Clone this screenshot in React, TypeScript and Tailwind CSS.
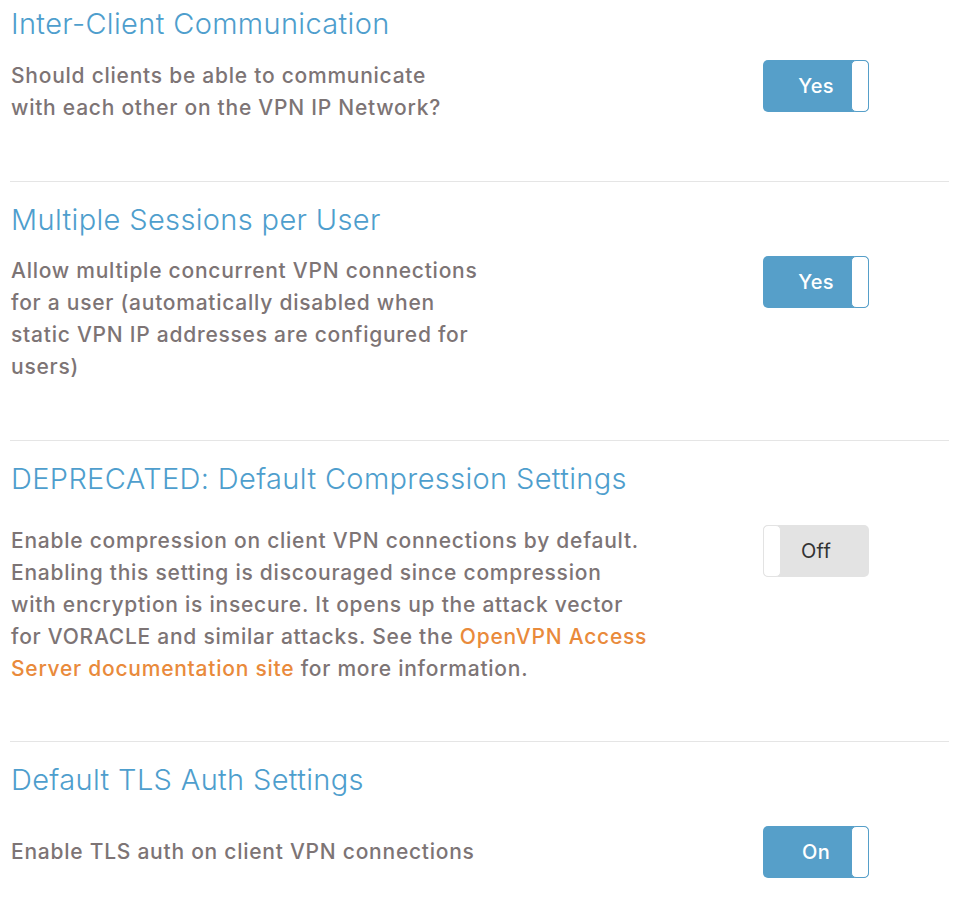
import React from 'react';

type ToggleProps = { on: boolean; label: string };

const Toggle: React.FC<ToggleProps> = ({ on, label }) => {
  if (on) {
    return (
      <div className="relative flex h-[52px] w-[106px] shrink-0 items-center rounded-[5px] bg-[#569fc9]">
        <span className="flex-1 pl-[18px] text-center text-[20px] font-medium tracking-[0.3px] text-white">{label}</span>
        <div className="h-full w-[18px] rounded-[5px] border border-[#569fc9] bg-white" />
      </div>
    );
  }
  return (
    <div className="relative flex h-[52px] w-[106px] shrink-0 items-center rounded-[5px] bg-[#e3e3e3]">
      <div className="h-full w-[18px] rounded-[5px] border border-[#e3e3e3] bg-white" />
      <span className="flex-1 pr-[18px] text-center text-[20px] font-normal tracking-[0.3px] text-[#333]">{label}</span>
    </div>
  );
};

const Heading: React.FC<{ children: React.ReactNode }> = ({ children }) => (
  <h2 className="text-[29px] font-light leading-[36px] tracking-[0.35px] text-[#4e9ecd]">{children}</h2>
);

export default function App() {
  return (
    <div
      className="min-h-[909px] w-[966px] bg-white pl-[10px]"
      style={{ fontFamily: 'Inter, "Open Sans", sans-serif' }}
    >
      <div className="w-[939px] text-[21px] leading-[32px] tracking-[0.75px] text-[#7d7475]">
        {/* Inter-Client Communication */}
        <section className="pl-[1px] pt-[6px] pb-[57px]">
          <Heading>Inter-Client Communication</Heading>
          <div className="mt-[18px] flex items-start pr-[80px]">
            <p className="flex-1 font-medium">
              Should clients be able to communicate
              <br />
              with each other on the VPN IP Network?
            </p>
            <Toggle on label="Yes" />
          </div>
        </section>

        <div className="h-px bg-[#e5e5e5]" />

        {/* Multiple Sessions */}
        <section className="pl-[1px] pt-[20px] pb-[57px]">
          <Heading>Multiple Sessions per User</Heading>
          <div className="mt-[17px] flex items-start pr-[80px]">
            <p className="flex-1 font-medium">
              Allow multiple concurrent VPN connections
              <br />
              for a user (automatically disabled when
              <br />
              static VPN IP addresses are configured for
              <br />
              users)
            </p>
            <div className="pt-px">
              <Toggle on label="Yes" />
            </div>
          </div>
        </section>

        <div className="h-px bg-[#e5e5e5]" />

        {/* Compression */}
        <section className="pl-[1px] pt-[20px] pb-[56px]">
          <Heading>DEPRECATED: Default Compression Settings</Heading>
          <div className="mt-[28px] flex items-start pr-[80px]">
            <p className="flex-1 font-medium">
              Enable compression on client VPN connections by default.
              <br />
              Enabling this setting is discouraged since compression
              <br />
              with encryption is insecure. It opens up the attack vector
              <br />
              for VORACLE and similar attacks. See the{' '}
              <a href="#" className="text-[#e98a3b]">
                OpenVPN Access
                <br />
                Server documentation site
              </a>{' '}
              for more information.
            </p>
            <Toggle on={false} label="Off" />
          </div>
        </section>

        <div className="h-px bg-[#e5e5e5]" />

        {/* TLS Auth */}
        <section className="pl-[1px] pt-[20px] pb-[31px]">
          <Heading>Default TLS Auth Settings</Heading>
          <div className="mt-[28px] flex items-center pr-[80px]">
            <p className="flex-1 font-medium">Enable TLS auth on client VPN connections</p>
            <Toggle on label="On" />
          </div>
        </section>
      </div>
    </div>
  );
}
